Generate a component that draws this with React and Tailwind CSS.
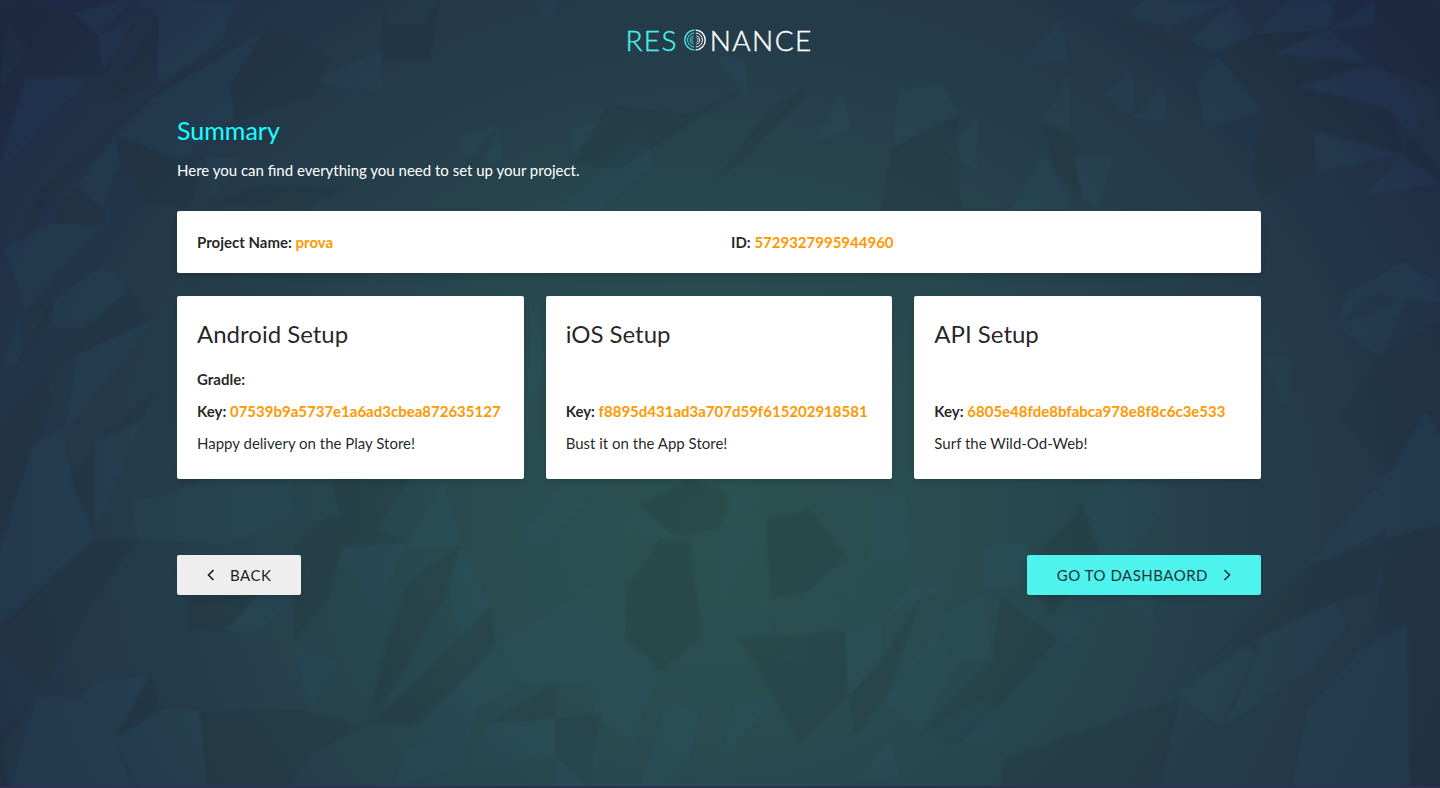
import React from "react";

const LIGHT_FACETS = [
  "0,85 8,25 28,48 5,85",
  "72,13 125,0 132,0 98,36",
  "98,36 132,22 103,70",
  "130,0 235,0 222,40 175,75 158,82 158,15",
  "25,78 90,77 15,155 0,170",
  "150,100 265,30 230,85 235,120 178,160 116,136",
  "76,187 116,136 120,160 102,208",
  "0,250 50,224 104,226 85,245 25,310 3,248",
  "385,0 440,0 423,24 385,24",
  "312,82 382,50 383,93",
  "205,155 240,160 210,200",
  "455,140 500,124 502,162 480,165",
  "535,0 558,0 548,26",
  "572,128 607,122 572,160",
  "610,160 643,126 655,165 600,210 560,210",
  "712,55 748,95 745,60",
  "815,140 845,90 850,130 812,143",
  "898,90 943,84 958,115 893,148",
  "940,150 977,120 977,170",
  "1017,66 1062,20 1068,60",
  "1040,122 1070,72 1070,135",
  "1128,75 1132,63 1135,118 1103,95",
  "1135,118 1163,86 1168,121",
  "1125,15 1145,0 1235,0 1170,27",
  "1187,41 1233,3 1255,34 1217,53",
  "1256,34 1290,0 1336,0 1328,30",
  "1328,30 1375,0 1375,25",
  "1273,54 1328,30 1370,64",
  "1300,86 1370,66 1440,90 1440,170 1390,110",
  "1217,55 1198,85 1205,128 1262,110",
  "1313,130 1402,155 1315,174",
  "1402,155 1440,183 1365,196",
  "1072,157 1114,155 1098,210 1082,200",
  "1020,195 1044,155 1075,210 1010,210",
  "20,316 48,305 18,362 0,375",
  "55,300 105,265 128,292 85,328 52,327",
  "78,355 155,320 66,430",
  "32,447 62,430 72,480 90,530 40,545 5,540",
  "95,445 143,420 108,500 95,530",
  "20,480 70,480 95,540 10,620 0,625 0,550",
  "130,500 160,498 205,480 290,480 295,517 230,545 137,540",
  "342,549 407,545 375,611",
  "410,543 443,483 461,546 408,550",
  "295,648 341,663 308,710",
  "565,480 603,480 552,543 518,543",
  "448,590 460,548 490,606 465,652",
  "497,645 590,588 624,580 625,640 660,673 595,687 517,687",
  "410,730 495,650 515,687 440,735",
  "594,687 658,674 632,745 594,715",
  "490,724 555,720 556,758 465,768",
  "660,710 700,710 670,748",
  "0,750 38,698 80,702 128,710 115,740 130,788 10,788",
  "95,685 150,676 115,740 80,702",
  "115,740 165,710 200,712 207,788 140,788",
  "225,632 258,596 295,598 260,632",
  "625,535 637,506 675,538",
  "730,495 762,494 730,520",
  "720,530 766,520 720,605",
  "736,637 768,600 770,633",
  "775,665 808,634 809,664",
  "809,598 806,594 845,555 848,596",
  "873,495 905,497 912,558 870,563",
  "882,622 912,587 948,586",
  "845,633 883,623 882,661 848,698",
  "985,548 1022,544 1032,560 1032,586 983,592",
  "935,620 982,597 993,662 957,664",
  "885,700 935,632 957,664 920,732",
  "920,735 990,698 998,738 958,748",
  "735,703 774,700 720,765",
  "1083,505 1115,478 1166,488 1166,508 1130,553 1100,553",
  "1052,618 1092,618 1058,652",
  "1116,600 1152,595 1155,623",
  "1175,695 1233,643 1255,655 1220,728",
  "1225,728 1265,635 1335,604 1346,628 1314,668",
  "1310,566 1373,490 1390,500 1385,530 1330,560",
  "1377,480 1440,480 1440,526 1388,540",
  "1307,712 1360,653 1408,625 1410,788 1292,788",
  "1348,295 1403,262 1440,285 1440,302 1405,301 1382,357 1336,327",
  "1378,493 1427,412 1440,440 1440,484",
  "1262,358 1291,358 1287,412",
  "530,300 546,360 525,440",
  "405,755 440,735 495,650 460,770 395,788",
  "555,720 556,788 590,788 600,740",
  "855,780 890,742 902,788",
  "670,705 700,710 690,760 665,788 640,788",
];

const DARK_FACETS = [
  "0,0 70,12 98,36 103,75 25,78 0,120",
  "158,82 158,15 125,70 100,105",
  "175,75 265,28 150,100 60,190 15,250 40,190",
  "230,85 270,25 330,60 315,95 235,120",
  "120,160 116,136 178,160 200,170 190,210 140,200",
  "50,224 76,187 104,210 104,226",
  "380,50 385,0 440,0 430,60 382,62",
  "208,205 260,185 355,187 300,210",
  "480,165 500,124 455,180",
  "610,105 690,115 740,90 620,170 570,165",
  "770,110 812,85 740,165 715,180",
  "893,148 958,115 960,210 880,210",
  "1105,15 1187,41 1217,53 1180,60 1125,30",
  "1217,53 1256,34 1328,30 1273,54 1370,64 1300,86 1265,110",
  "1300,86 1390,110 1402,155 1313,130 1262,110",
  "1375,0 1440,0 1440,180 1402,155 1424,110 1380,60",
  "1043,120 1072,135 1082,200 1055,170",
  "1262,110 1253,170 1260,196 1315,174 1313,130",
  "20,316 52,300 48,318 20,365",
  "52,365 78,355 150,320 128,292 85,328",
  "0,430 52,368 45,420 32,447 5,540 0,540",
  "70,485 95,445 95,530",
  "98,443 155,390 143,420",
  "95,540 140,540 95,600 40,690 0,650 0,620",
  "188,600 225,598 258,596 225,632 188,632",
  "295,545 330,515 410,543 342,549 330,600 295,640",
  "408,585 460,547 448,590 400,680 366,726 385,650",
  "460,640 490,610 495,646 420,728 366,726 420,680",
  "115,740 150,676 162,710",
  "490,724 555,686 555,720",
  "200,712 300,712 365,728 310,755 290,788 207,788",
  "660,540 690,542 700,620 700,640 660,673 625,638 626,590",
  "0,735 36,700 10,788 0,788",
  "766,520 810,510 848,560 805,595 770,600",
  "848,698 882,661 920,600 885,700 855,735",
  "1030,560 1083,505 1100,553 1052,618 1032,590",
  "1003,760 1180,700 1160,788 1000,788",
  "1175,695 1310,566 1388,540 1373,590 1335,604 1265,635",
  "1388,540 1440,526 1440,620 1408,625 1375,625",
  "1408,625 1440,600 1440,788 1410,788",
  "1337,325 1376,294 1405,301",
  "1382,357 1440,320 1440,430 1427,412 1390,470 1340,420",
  "555,720 600,715 590,788 556,758",
  "740,640 845,633 848,698 800,745 775,700",
  "920,735 958,748 1003,705 1060,640 1000,600 993,662",
  "330,480 410,480 370,540 340,520",
  "690,480 730,495 720,530 675,538 637,506",
];

function Backdrop() {
  return (
    <svg
      className="absolute inset-0 -z-10 h-full w-full"
      viewBox="0 0 1440 788"
      preserveAspectRatio="none"
      aria-hidden="true"
    >
      <defs>
        <radialGradient id="glow" gradientUnits="userSpaceOnUse" cx="0" cy="0" r="1" gradientTransform="translate(715 525) scale(880 780)">
          <stop offset="0" stopColor="#2c5250" />
          <stop offset="0.3" stopColor="#294b50" />
          <stop offset="0.6" stopColor="#253e4b" />
          <stop offset="0.85" stopColor="#213348" />
          <stop offset="1" stopColor="#1e2843" />
        </radialGradient>
        <filter id="soften" colorInterpolationFilters="sRGB">
          <feGaussianBlur stdDeviation="1" />
        </filter>
      </defs>
      <rect width="1440" height="788" fill="url(#glow)" />
      <g opacity="0.11">
        <g fill="#2f607c" filter="url(#soften)">
          {LIGHT_FACETS.map((points) => (
            <polygon key={points} points={points} />
          ))}
        </g>
      </g>
      <g opacity="0.15">
        <g fill="#1d2a2c" filter="url(#soften)">
          {DARK_FACETS.map((points) => (
            <polygon key={points} points={points} />
          ))}
        </g>
      </g>
    </svg>
  );
}

function RippleMark() {
  return (
    <svg className="ml-0.5 h-[22px] w-[22px]" viewBox="0 0 22 22" fill="none" aria-hidden="true">
      <g stroke="#48efe9">
        <path d="M10.4 1.1A9.6 9.9 0 0 0 10.4 20.9" strokeWidth="1.4" />
        <path d="M10.2 4A6.6 7 0 0 0 10.2 18" strokeWidth="1" />
        <path d="M9.6 6.6A4.2 4.5 0 0 0 9.6 15.4" strokeWidth="0.9" />
        <path d="M9.6 8.8A2.3 2.3 0 0 0 9.6 13.2" strokeWidth="0.7" />
      </g>
      <g stroke="#fff">
        <path d="M11.6 1.1A9.6 9.9 0 0 1 11.6 20.9" strokeWidth="1.4" />
        <path d="M11.8 4A6.6 7 0 0 1 11.8 18" strokeWidth="1" />
        <path d="M12.4 6.6A4.2 4.5 0 0 1 12.4 15.4" strokeWidth="0.9" />
        <path d="M12.4 8.8A2.3 2.3 0 0 1 12.4 13.2" strokeWidth="0.7" />
      </g>
    </svg>
  );
}

function Chevron({ d }) {
  return (
    <svg className="h-3 w-2" viewBox="0 0 8 12" fill="none" stroke="currentColor" strokeWidth="1.6" aria-hidden="true">
      <path d={d} />
    </svg>
  );
}

function Field({ label, value }) {
  return (
    <p className="font-bold">
      {label}: <span className="text-[#ff9800]">{value}</span>
    </p>
  );
}

function SetupCard({ title, note, keyValue, message }) {
  return (
    <section className="rounded-xs bg-white px-5 pt-5 pb-6 shadow-md">
      <h2 className="text-[24px] leading-9">{title}</h2>
      <div className="mt-[15px] flex flex-col gap-2">
        <p className="min-h-6 font-bold">{note}</p>
        <Field label="Key" value={keyValue} />
        <p>{message}</p>
      </div>
    </section>
  );
}

export default function App() {
  return (
    <div className="relative isolate min-h-screen border-b-2 border-[#2c3350] pr-0.5 font-[Lato,sans-serif] text-[15px] leading-6 text-black/87">
      <Backdrop />
      <header className="flex h-20 items-center justify-center">
        <a
          href="#home"
          aria-label="Resonance"
          className="flex items-center gap-1 text-[28px] leading-8 font-light tracking-wider [-webkit-text-stroke:0.4px]"
        >
          <span className="text-[#48efe9]">RES</span>
          <RippleMark />
          <span className="text-white">NANCE</span>
        </a>
      </header>

      <main className="mx-auto w-full max-w-[1084px] pt-8">
        <h1 className="text-[25px] leading-9 text-[#18ffff]">Summary</h1>
        <p className="mt-[10px] text-white">Here you can find everything you need to set up your project.</p>

        <section className="mt-[29px] grid grid-cols-2 gap-6 rounded-xs bg-white px-5 py-[19px] shadow-md">
          <Field label="Project Name" value="prova" />
          <Field label="ID" value="5729327995944960" />
        </section>

        <div className="mt-[23px] grid grid-cols-3 gap-[22px]">
          <SetupCard
            title="Android Setup"
            note="Gradle:"
            keyValue="07539b9a5737e1a6ad3cbea872635127"
            message="Happy delivery on the Play Store!"
          />
          <SetupCard
            title="iOS Setup"
            keyValue="f8895d431ad3a707d59f615202918581"
            message="Bust it on the App Store!"
          />
          <SetupCard
            title="API Setup"
            keyValue="6805e48fde8bfabca978e8f8c6c3e533"
            message="Surf the Wild-Od-Web!"
          />
        </div>

        <div className="mt-[76px] flex justify-between pb-16">
          <button type="button" className="flex h-10 items-center gap-[15px] rounded-xs bg-[#eeeeee] px-[30px] tracking-[0.5px] text-black/90 shadow-md">
            <Chevron d="M6.5 1L1.5 6L6.5 11" />
            BACK
          </button>
          <button type="button" className="flex h-10 items-center gap-[15px] rounded-xs bg-[#4df3ec] px-[30px] tracking-[0.5px] text-[#263238] shadow-md">
            GO TO DASHBAORD
            <Chevron d="M1.5 1L6.5 6L1.5 11" />
          </button>
        </div>
      </main>
    </div>
  );
}
